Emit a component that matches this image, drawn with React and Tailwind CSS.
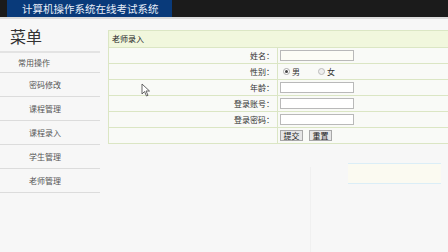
const font = { fontFamily: '"Noto Sans CJK SC", "Noto Sans", sans-serif' };

const menu = ["密码修改", "课程管理", "课程录入", "学生管理", "老师管理"];

const Field = ({ label, children }) => (
  <div className="flex h-[16px] border-b border-[#dbe6c4]">
    <div className="flex w-[169px] items-center justify-end border-r border-[#dbe6c4] pr-[3px] text-[8px] text-[#333]">
      {label ? `${label}：` : ""}
    </div>
    <div className="flex flex-1 items-center pl-[2px]">{children}</div>
  </div>
);

const Input = ({ tint }) => (
  <div
    className={`h-[11px] w-[74px] border border-[#b9b9b9] ${tint ? "bg-[#fdfdf6]" : "bg-white"}`}
  />
);

const Cursor = () => (
  <svg width="10" height="14" viewBox="0 0 10 14" className="absolute left-[141px] top-[83px]">
    <path d="M1 1 L1 11 L3.5 8.5 L5.5 13 L7 12.3 L5 8 L8.5 8 Z" fill="#fff" stroke="#555" strokeWidth="0.9" />
  </svg>
);

export default function App() {
  return (
    <div className="relative h-[252px] w-[448px] overflow-hidden bg-[#f7f7f7]" style={font}>
      <div className="h-[17px] bg-[#1b1b1b]">
        <div className="ml-[7px] h-[17px] w-[165px] bg-[#093a7a] pl-[15px] text-[10.5px] leading-[17px] text-[#e8eef8]">
          计算机操作系统在线考试系统
        </div>
      </div>
      <div className="h-[2px] bg-[#dcdcdc]" />

      <div className="flex">
        <div className="w-[100px]">
          <div className="h-[34px] border-b-2 border-[#e3e3e3] pl-[10px] pt-[7px] text-[16px] leading-[20px] text-[#333]">
            菜单
          </div>
          <div className="flex h-[20px] items-center border-b border-[#dcdcdc] pl-[18px] text-[8px] text-[#555]">
            常用操作
          </div>
          {menu.map((m) => (
            <div
              key={m}
              className="flex h-[24px] items-center border-b border-[#dcdcdc] pl-[29px] text-[8px] text-[#555]"
            >
              {m}
            </div>
          ))}
        </div>

        <div className="flex-1 pl-[8px] pt-[11px]">
          <div className="border-l border-t border-[#dbe6c4] bg-[#f9faf7]">
            <div className="flex h-[17px] items-center border-b border-[#dbe6c4] bg-[#f1f7dd] pl-[3px] text-[8px] text-[#222]">
              老师录入
            </div>
            <Field label="姓名">
              <Input tint />
            </Field>
            <Field label="性别">
              <div className="flex items-center text-[8px] text-[#333]">
                <span className="ml-[3px] flex h-[7px] w-[7px] items-center justify-center rounded-full border border-[#aaa] bg-white">
                  <span className="h-[3px] w-[3px] rounded-full bg-[#444]" />
                </span>
                <span className="ml-[2px]">男</span>
                <span className="ml-[18px] h-[7px] w-[7px] rounded-full border border-[#bbb] bg-[#eee]" />
                <span className="ml-[2px]">女</span>
              </div>
            </Field>
            <Field label="年龄">
              <Input />
            </Field>
            <Field label="登录账号">
              <Input />
            </Field>
            <Field label="登录密码">
              <Input />
            </Field>
            <Field label="">
              <div className="flex gap-[6px]">
                <div className="flex h-[11px] w-[23px] items-center justify-center border border-[#a8a8a8] bg-[#e6e6e6] text-[8px] text-[#222]">
                  提交
                </div>
                <div className="flex h-[11px] w-[23px] items-center justify-center border border-[#a8a8a8] bg-[#e6e6e6] text-[8px] text-[#222]">
                  重置
                </div>
              </div>
            </Field>
          </div>
        </div>
      </div>

      <Cursor />
      <div className="absolute left-[310px] top-[167px] h-[85px] w-px bg-[#f0f0f0]" />
      <div className="absolute left-[348px] top-[163px] h-[21px] w-[93px] border-y border-[#dbeef7] bg-[#fbfaf1]" />
    </div>
  );
}
